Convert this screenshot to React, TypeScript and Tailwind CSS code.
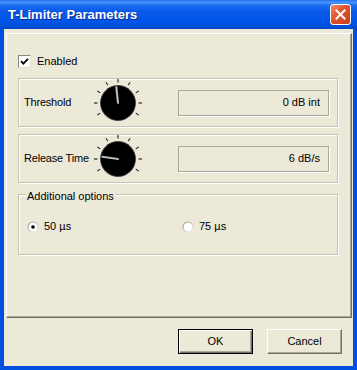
import React from 'react';

const FONT = "font-['Liberation_Sans',Arial,sans-serif]";

const Knob = ({ angle }: { angle: number }) => {
  const cx = 28;
  const cy = 24;
  const ticks = [-120, -90, -60, -30, 0, 30, 60, 90, 120];
  const pt = (deg: number, r: number) => {
    const a = (deg * Math.PI) / 180;
    return { x: cx + r * Math.sin(a), y: cy - r * Math.cos(a) };
  };
  const tip = pt(angle, 16);
  return (
    <svg width="56" height="48" viewBox="0 0 56 48" className="shrink-0">
      {ticks.map((t) => {
        const a = pt(t, 20.5);
        const b = pt(t, 24);
        return <line key={t} x1={a.x} y1={a.y} x2={b.x} y2={b.y} stroke="#000" strokeWidth="1" />;
      })}
      <circle cx={cx} cy={cy} r="17.5" fill="#000" stroke="#3a3a3a" strokeWidth="0.8" />
      <line x1={cx} y1={cy} x2={tip.x} y2={tip.y} stroke="#9c9c9c" strokeWidth="2.2" strokeLinecap="round" />
      <line x1={cx} y1={cy} x2={tip.x} y2={tip.y} stroke="#d6d6d6" strokeWidth="0.8" />
    </svg>
  );
};

const Radio = ({ checked }: { checked?: boolean }) => (
  <svg width="12" height="12" viewBox="0 0 12 12" className="shrink-0">
    <defs>
      <linearGradient id="rg" x1="0" y1="0" x2="1" y2="1">
        <stop offset="0" stopColor="#8a887c" />
        <stop offset="0.55" stopColor="#c9c6b6" />
        <stop offset="1" stopColor="#ffffff" />
      </linearGradient>
    </defs>
    <circle cx="6" cy="6" r="5.5" fill="url(#rg)" />
    <circle cx="6" cy="6" r="4.5" fill="#fff" />
    {checked && <circle cx="6" cy="6" r="1.8" fill="#000" />}
  </svg>
);

const ParamBox = ({ label, angle, value }: { label: string; angle: number; value: string }) => (
  <div className="flex items-center h-[49px] w-[320px] pl-[5px] border border-[#c5c2b2] shadow-[inset_1px_1px_0_#fff,1px_1px_0_#fff]">
    <span className="w-[66px] shrink-0 whitespace-nowrap tracking-[-0.2px]">{label}</span>
    <Knob angle={angle} />
    <div className="ml-[32px] w-[151px] h-[26px] flex items-center justify-end pr-[8px] border border-[#aca899] shadow-[1px_1px_0_#fff]">
      {value}
    </div>
  </div>
);

export default function App() {
  return (
    <div className={`w-[357px] h-[370px] flex flex-col bg-[#0050e0] text-[11px] text-black ${FONT}`}>
      {/* title bar */}
      <div className="h-[29px] shrink-0 flex items-center justify-between pl-[8px] pr-[6px] bg-[linear-gradient(to_bottom,#1d6ff2_0%,#4996fb_8%,#1c6ff3_18%,#0859ea_40%,#0055e6_75%,#0051dc_90%,#0047c6_100%)]">
        <span className="text-[13px] font-bold text-white [text-shadow:1px_1px_0_#0a2a8f]">T-Limiter Parameters</span>
        <div className="w-[21px] h-[21px] rounded-[3px] border border-white flex items-center justify-center bg-[linear-gradient(135deg,#f08a66_0%,#e0532c_45%,#c83c18_100%)]">
          <svg width="11" height="11" viewBox="0 0 11 11">
            <path d="M1.5 1.5 L9.5 9.5 M9.5 1.5 L1.5 9.5" stroke="#fff" strokeWidth="2" strokeLinecap="square" />
          </svg>
        </div>
      </div>

      {/* client area */}
      <div className="flex-1 flex flex-col bg-[#ece9d8] ml-[4px] mr-[4px] mb-[4px]">
        <div className="mt-[4px] ml-[2px] mr-[1px] h-[285px] flex flex-col pl-[11px] border-t border-l border-white border-r border-b border-r-[#716f64] border-b-[#716f64] shadow-[inset_-1px_-1px_0_#aca899]">
          <label className="mt-[21px] flex items-center h-[13px] gap-[6px]">
            <span className="w-[13px] h-[13px] bg-white border border-t-[#8a887c] border-l-[#8a887c] border-b-[#e6e3d5] border-r-[#e6e3d5] flex items-center justify-center">
              <svg width="9" height="9" viewBox="0 0 9 9">
                <polyline points="1,4.2 3.4,6.6 8,1.8" fill="none" stroke="#000" strokeWidth="1.8" />
              </svg>
            </span>
            <span>Enabled</span>
          </label>

          <div className="mt-[10px]">
            <ParamBox label="Threshold" angle={-6} value="0 dB int" />
          </div>
          <div className="mt-[7px]">
            <ParamBox label="Release Time" angle={-82} value="6 dB/s" />
          </div>

          <div className="relative mt-[11px] w-[320px] h-[61px] border border-[#c5c2b2] shadow-[inset_1px_1px_0_#fff,1px_1px_0_#fff]">
            <span className="absolute left-[7px] top-[-5px] leading-[13px] px-[1px] bg-[#ece9d8]">Additional options</span>
            <div className="flex items-center h-full pl-[8px] pt-[4px]">
              <div className="flex items-center gap-[5px] w-[155px]">
                <Radio checked />
                <span>50 µs</span>
              </div>
              <div className="flex items-center gap-[5px]">
                <Radio />
                <span>75 µs</span>
              </div>
            </div>
          </div>
        </div>

        <div className="mt-[11px] flex justify-end gap-[14px] mr-[11px]">
          <button className="w-[75px] h-[25px] border border-black bg-[#ece9d8] shadow-[inset_1px_1px_0_#fff,inset_-1px_-1px_0_#716f64,inset_-2px_-2px_0_#aca899]">
            OK
          </button>
          <button className="w-[75px] h-[25px] bg-[#ece9d8] border border-t-white border-l-white border-r-[#716f64] border-b-[#716f64] shadow-[inset_-1px_-1px_0_#aca899]">
            Cancel
          </button>
        </div>
      </div>
    </div>
  );
}
